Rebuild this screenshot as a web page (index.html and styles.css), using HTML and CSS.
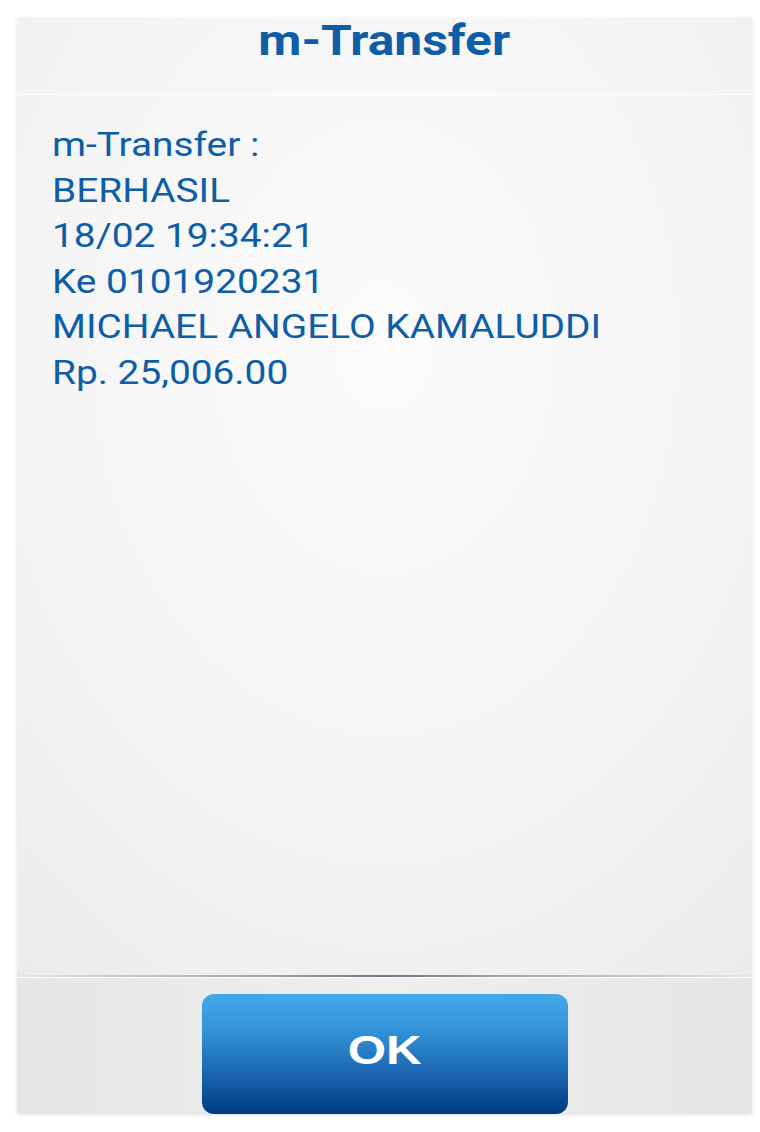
FILE: index.html
```html
<!DOCTYPE html>
<html>
<head>
<meta charset="utf-8">
<link rel="stylesheet" href="styles.css">
</head>
<body>
<div class="dialog">
  <div class="title"><span class="title-text">m-Transfer</span></div>
  <div class="content">
    <div class="line">m-Transfer :</div>
    <div class="line">BERHASIL</div>
    <div class="line">18/02 19:34:21</div>
    <div class="line">Ke 0101920231</div>
    <div class="line">MICHAEL ANGELO KAMALUDDI</div>
    <div class="line">Rp. 25,006.00</div>
  </div>
  <div class="footer">
    <button class="ok"><span class="ok-text">OK</span></button>
  </div>
</div>
</body>
</html>
```
FILE: styles.css
```css
html, body {
  margin: 0;
  padding: 0;
  background: #ffffff;
  overflow: hidden;
}
body {
  padding: 17px 0 0 17px;
  width: 760px;
  height: 1132px;
  box-sizing: border-box;
}
.dialog {
  width: 735px;
  height: 1096px;
  display: flex;
  flex-direction: column;
  background: radial-gradient(ellipse 90% 80% at 50% 30%, #fbfbfb 0%, #f4f4f4 55%, #e9e9e9 100%);
  box-shadow: 0 2px 4px rgba(0,0,0,0.12);
  font-family: Roboto, "Noto Sans", sans-serif;
}
.title {
  height: 78px;
  border-bottom: 1px solid rgba(255,255,255,0.9);
  text-align: center;
  box-sizing: border-box;
  padding-top: 1px;
}
.title-text {
  display: inline-block;
  font-weight: bold;
  font-size: 42px;
  line-height: 46px;
  color: #0d5ea6;
  transform: scaleX(1.185);
  transform-origin: center;
}
.content {
  flex: 1;
  padding: 27px 35px 0 35px;
  color: #0d5ea6;
  font-size: 33.5px;
  line-height: 45.6px;
}
.line {
  width: max-content;
  transform: scaleX(1.159);
  transform-origin: left center;
  white-space: nowrap;
}
.footer {
  height: 138px;
  box-sizing: border-box;
  border-top: 2px solid transparent;
  border-image: linear-gradient(90deg, #e4e6ea 0%, #9aa1ab 35%, #6e7785 50%, #9aa1ab 65%, #e4e6ea 100%) 1;
  box-shadow: inset 0 1px 0 #ffffff;
  padding-top: 17px;
  padding-left: 1px;
  display: flex;
  justify-content: center;
  background: linear-gradient(90deg, #e5e5e5 0%, #efefef 50%, #e5e5e5 100%);
}
.ok {
  width: 366px;
  height: 120px;
  border: none;
  border-radius: 12px;
  background: linear-gradient(180deg, #43a9e9 0%, #3393d8 30%, #1a67b2 65%, #003a80 100%);
  padding: 0 0 8px 0;
  display: flex;
  align-items: center;
  justify-content: center;
}
.ok-text {
  display: inline-block;
  color: #ffffff;
  font-family: "Liberation Sans", Arial, sans-serif;
  font-weight: bold;
  font-size: 41px;
  transform: scaleX(1.2);
}
```
